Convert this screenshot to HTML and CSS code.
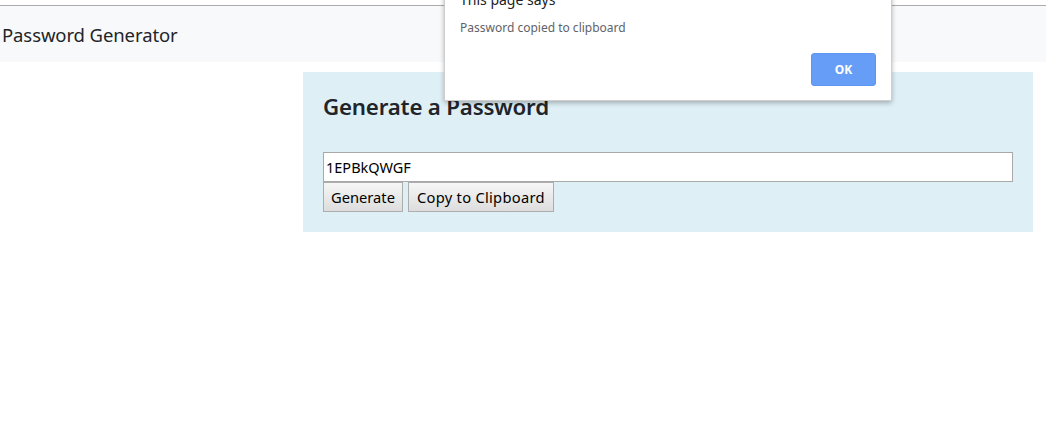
FILE: index.html
```html
<!DOCTYPE html>
<html>
<head>
<meta charset="utf-8">
<title>Password Generator</title>
<link rel="stylesheet" href="styles.css">
</head>
<body>
<div class="topline"></div>
<nav class="navbar"><span class="brand">Password Generator</span></nav>
<main class="main">
  <section class="card">
    <h3 class="title">Generate a Password</h3>
    <input class="pw" type="text" value="1EPBkQWGF">
    <div class="actions">
      <button class="btn">Generate</button>
      <button class="btn btn-copy">Copy to Clipboard</button>
    </div>
  </section>
</main>
<div class="dialog">
  <div class="dlg-title">This page says</div>
  <div class="dlg-msg">Password copied to clipboard</div>
  <div class="dlg-actions"><button class="ok">OK</button></div>
</div>
</body>
</html>
```
FILE: styles.css
```css
html, body {
  margin: 0;
  padding: 0;
  background: #fff;
  font-family: "Noto Sans", "Open Sans", sans-serif;
  color: #212529;
}
.topline {
  height: 5px;
  border-bottom: 1px solid #ababab;
}
.navbar {
  height: 56px;
  background: #f8f9fa;
  display: flex;
  align-items: center;
  padding-left: 2px;
}
.brand {
  font-size: 18.5px;
  color: #212529;
  letter-spacing: -0.1px;
}
.main {
  padding: 10px 13px 0 303px;
}
.card {
  background: #dfeff6;
  padding: 20px 20px 20px 20px;
  height: 120px;
}
.title {
  margin: 0 0 30px 0;
  font-size: 22.3px;
  font-weight: 600;
  line-height: 30px;
  color: #212529;
  letter-spacing: -0.2px;
}
.pw {
  display: block;
  box-sizing: border-box;
  width: 690px;
  height: 30px;
  margin: 0;
  padding: 0 2px;
  border: 1px solid #a9a9a9;
  font-family: "Noto Sans", "Open Sans", sans-serif;
  font-size: 14.5px;
  color: #000;
  background: #fff;
}
.actions {
  display: flex;
  gap: 5px;
}
.btn {
  box-sizing: border-box;
  height: 30px;
  padding: 0 7px;
  border: 1px solid #adadad;
  background: linear-gradient(#f6f6f6, #dddddd);
  font-family: "Noto Sans", "Open Sans", sans-serif;
  font-size: 14.7px;
  color: #000;
}
.btn-copy {
  padding: 0 8px;
  letter-spacing: 0.28px;
}
.dialog {
  position: absolute;
  left: 444px;
  top: -20px;
  width: 448px;
  height: 121px;
  box-sizing: border-box;
  background: #fff;
  border: 1px solid #cfcfcf;
  border-top: none;
  border-radius: 0 0 2px 2px;
  box-shadow: 0 2px 5px rgba(0,0,0,0.28);
  padding: 12px 15px 0 15px;
}
.dlg-title {
  font-size: 14px;
  line-height: 16px;
  color: #202124;
  height: 16px;
}
.dlg-msg {
  margin-top: 12px;
  font-size: 12px;
  line-height: 16px;
  color: #5f6368;
}
.dlg-actions {
  display: flex;
  justify-content: flex-end;
  margin-top: 17px;
}
.ok {
  width: 65px;
  height: 33px;
  border: 1px solid #5d95f2;
  border-radius: 3px;
  background: #669df6;
  color: #fff;
  font-family: "Noto Sans", "Open Sans", sans-serif;
  font-weight: 700;
  font-size: 12px;
}
```
